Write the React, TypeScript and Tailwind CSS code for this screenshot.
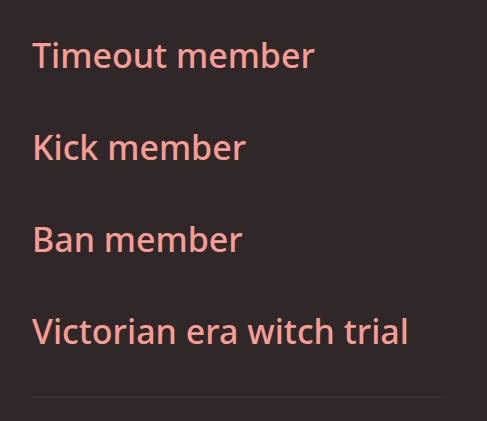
const items = ['Timeout member', 'Kick member', 'Ban member', 'Victorian era witch trial'];

export default function App() {
  return (
    <div className="w-[487px] h-[421px] bg-[#302729] overflow-hidden pt-[32px] px-[32px]" style={{ fontFamily: '"Noto Sans", sans-serif' }}>
      <div className="flex flex-col w-[415px]">
        {items.map((label) => (
          <div key={label} className="h-[92px] flex items-start text-[34px] leading-[46px] font-medium text-[#f89d96] tracking-[0px]">
            {label}
          </div>
        ))}
        <div className="h-[2px] bg-[#3b3133] -mt-[4px]" />
      </div>
    </div>
  );
}
